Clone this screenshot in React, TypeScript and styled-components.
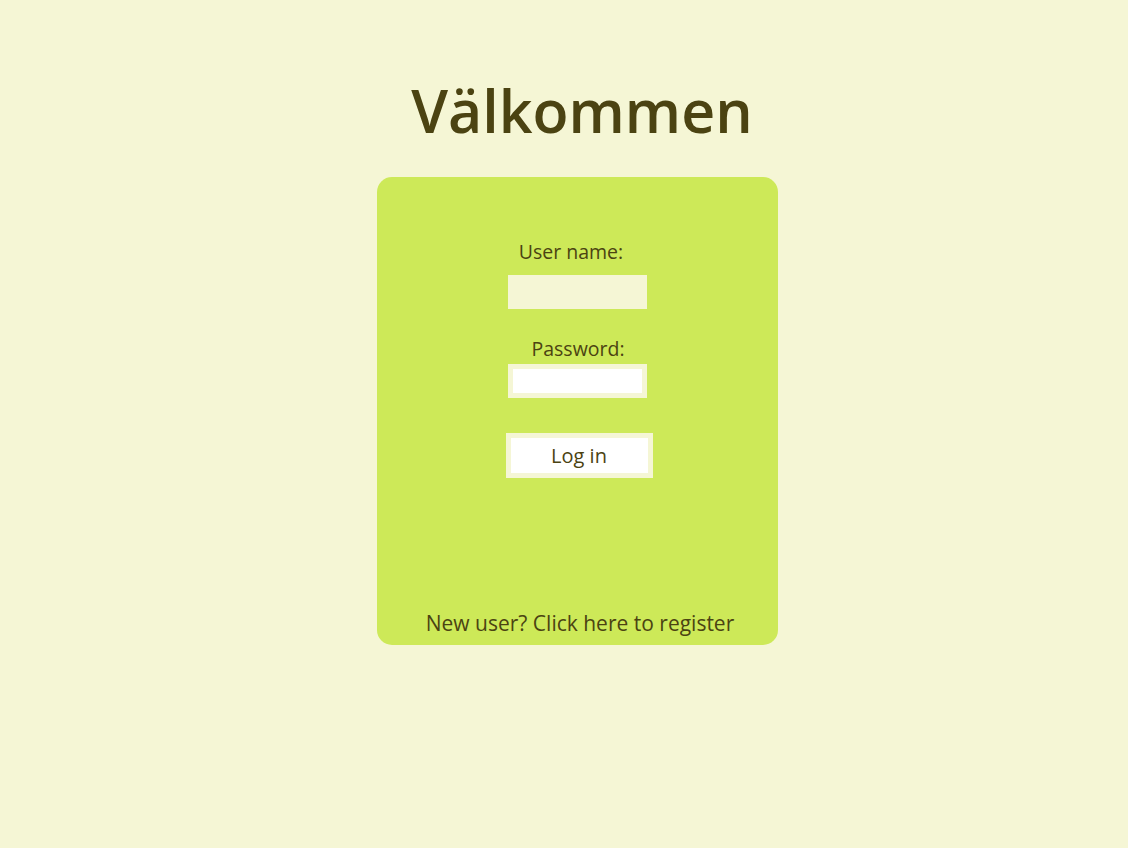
import React from "react";
import styled, { createGlobalStyle } from "styled-components";

const Global = createGlobalStyle`
  html, body {
    margin: 0;
    padding: 0;
    background: #f5f6d5;
  }
  body {
    font-family: "Comic Sans MS", "Open Sans", "DejaVu Sans", sans-serif;
    color: #4b4312;
  }
`;

const Page = styled.div`
  display: flex;
  flex-direction: column;
  align-items: center;
  padding: 66px 0 0 26px;
  min-height: 848px;
  box-sizing: border-box;
`;

const Title = styled.h1`
  margin: 0 0 0 10px;
  height: 111px;
  font-size: 59px;
  font-weight: 600;
  line-height: 88px;
  color: #4b4312;
`;

const Card = styled.form`
  width: 401px;
  height: 468px;
  box-sizing: border-box;
  background: #cde958;
  border-radius: 15px;
  display: flex;
  flex-direction: column;
  align-items: center;
  padding: 63px 0 10px;
`;

const Label = styled.label<{ $shift?: number }>`
  display: block;
  font-size: 19.5px;
  line-height: 24px;
  color: #4b4312;
  margin-left: ${(p) => p.$shift ?? 0}px;
`;

const Input = styled.input<{ $filled?: boolean; $gap: number }>`
  display: block;
  width: 139px;
  height: 34px;
  box-sizing: border-box;
  margin: ${(p) => p.$gap}px 0 0 0;
  border: 5px solid #f5f6d5;
  background: ${(p) => (p.$filled ? "#f5f6d5" : "#ffffff")};
  outline: none;
  padding: 0 4px;
  font-family: inherit;
  font-size: 16px;
`;

const Field = styled.div<{ $gap: number }>`
  display: flex;
  flex-direction: column;
  align-items: center;
  margin-top: ${(p) => p.$gap}px;
`;

const Button = styled.button`
  margin-top: 35px;
  margin-left: 4px;
  width: 147px;
  height: 45px;
  box-sizing: border-box;
  border: 5px solid #f5f6d5;
  background: #ffffff;
  font-family: inherit;
  font-size: 20px;
  color: #4b4312;
  cursor: pointer;
`;

const Footer = styled.a`
  margin-top: auto;
  margin-left: 6px;
  font-size: 21px;
  line-height: 24px;
  color: #4b4312;
  text-decoration: none;
`;

export default function App() {
  return (
    <>
      <Global />
      <Page>
        <Title>Välkommen</Title>
        <Card onSubmit={(e) => e.preventDefault()}>
          <Field $gap={0}>
            <Label $shift={-12}>User name:</Label>
            <Input $filled $gap={11} type="text" />
          </Field>
          <Field $gap={28}>
            <Label $shift={2}>Password:</Label>
            <Input $gap={3} type="password" />
          </Field>
          <Button type="submit">Log in</Button>
          <Footer href="#">New user? Click here to register</Footer>
        </Card>
      </Page>
    </>
  );
}
